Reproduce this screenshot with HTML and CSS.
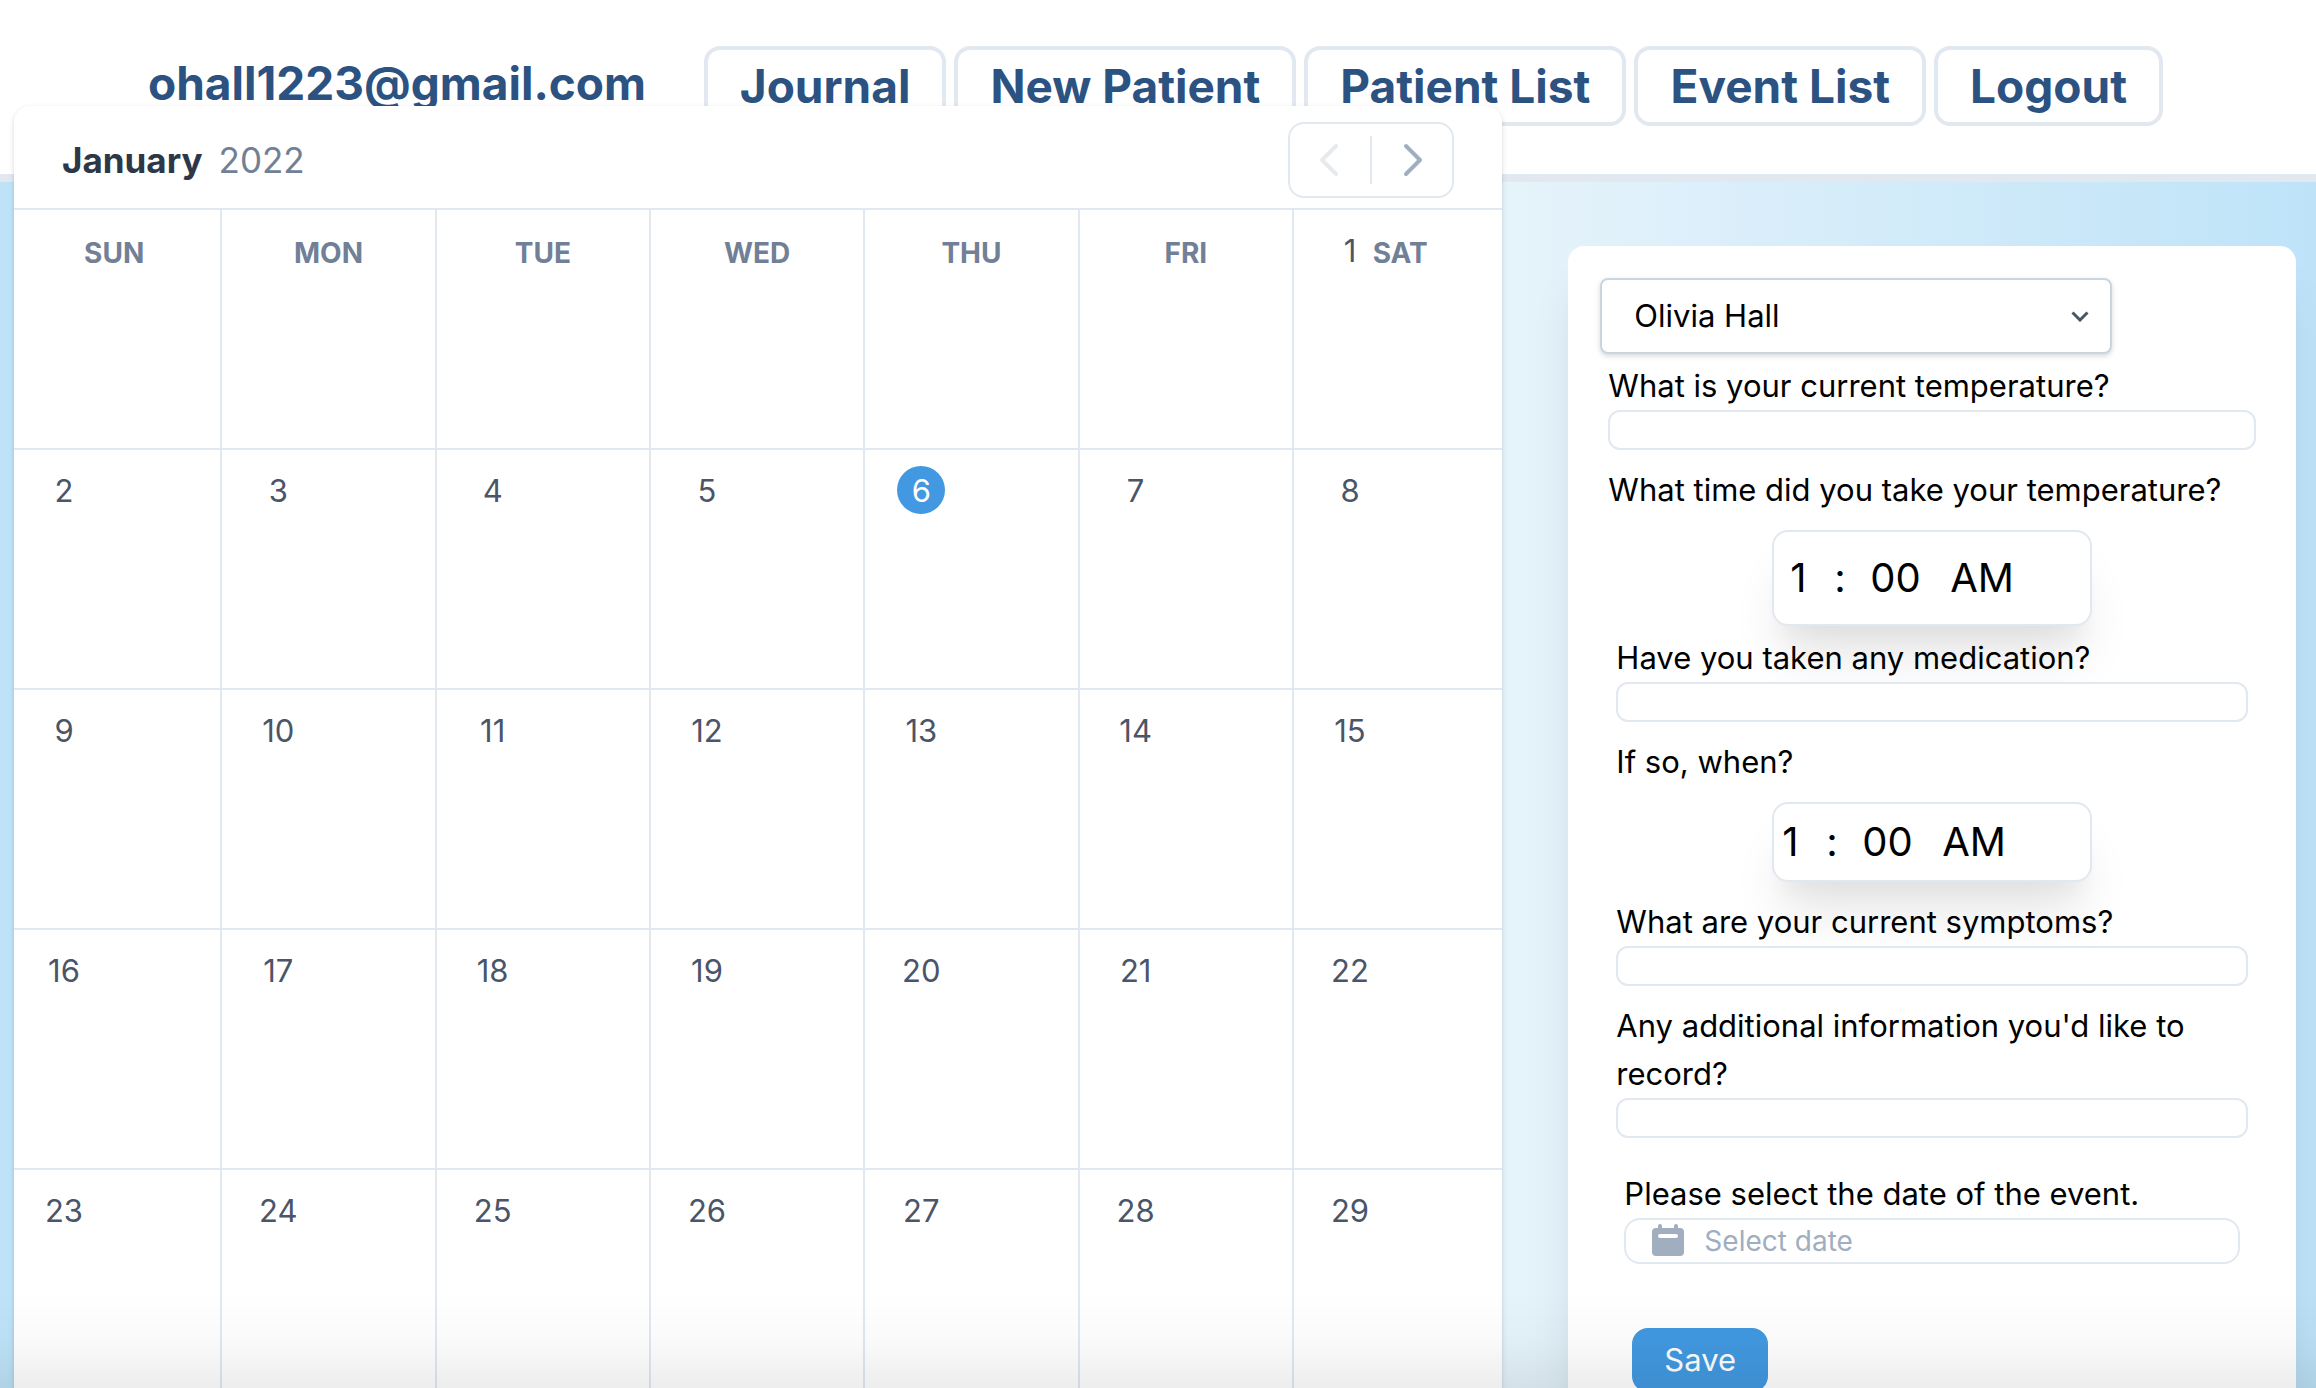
FILE: index.html
```html
<!DOCTYPE html>
<html lang="en">
<head>
<meta charset="utf-8">
<title>Journal</title>
<link rel="stylesheet" href="styles.css">
</head>
<body>
<header class="topbar">
  <span class="account">ohall1223@gmail.com</span>
  <nav class="nav">
    <a class="nav-link" href="#journal">Journal</a>
    <a class="nav-link" href="#new-patient">New Patient</a>
    <a class="nav-link" href="#patients">Patient List</a>
    <a class="nav-link" href="#events">Event List</a>
    <a class="nav-link" href="#logout">Logout</a>
  </nav>
</header>
<main class="content">
  <section class="calendar">
    <div class="calendar-head">
      <h1 class="calendar-title"><b class="month">January</b><span class="year">2022</span></h1>
      <div class="pager">
        <button class="pager-button" type="button" disabled>
          <svg class="pager-icon" viewBox="0 0 24 24"><path d="M15 19l-7-7 7-7"/></svg>
        </button>
        <button class="pager-button" type="button">
          <svg class="pager-icon" viewBox="0 0 24 24"><path d="M9 5l7 7-7 7"/></svg>
        </button>
      </div>
    </div>
    <table class="month-table">
      <thead>
        <tr>
          <th><span class="weekday">SUN</span></th>
          <th><span class="weekday">MON</span></th>
          <th><span class="weekday">TUE</span></th>
          <th><span class="weekday">WED</span></th>
          <th><span class="weekday">THU</span></th>
          <th><span class="weekday">FRI</span></th>
          <th><span class="weekday">SAT</span></th>
        </tr>
      </thead>
      <tbody>
        <tr><td></td><td></td><td></td><td></td><td></td><td></td><td><span class="day">1</span></td></tr>
        <tr><td><span class="day">2</span></td><td><span class="day">3</span></td><td><span class="day">4</span></td><td><span class="day">5</span></td><td><span class="day today">6</span></td><td><span class="day">7</span></td><td><span class="day">8</span></td></tr>
        <tr><td><span class="day">9</span></td><td><span class="day">10</span></td><td><span class="day">11</span></td><td><span class="day">12</span></td><td><span class="day">13</span></td><td><span class="day">14</span></td><td><span class="day">15</span></td></tr>
        <tr><td><span class="day">16</span></td><td><span class="day">17</span></td><td><span class="day">18</span></td><td><span class="day">19</span></td><td><span class="day">20</span></td><td><span class="day">21</span></td><td><span class="day">22</span></td></tr>
        <tr><td><span class="day">23</span></td><td><span class="day">24</span></td><td><span class="day">25</span></td><td><span class="day">26</span></td><td><span class="day">27</span></td><td><span class="day">28</span></td><td><span class="day">29</span></td></tr>
      </tbody>
    </table>
  </section>

  <form class="entry">
    <div class="patient">
      <select class="patient-select" aria-label="Patient"><option>Olivia Hall</option></select>
      <svg class="patient-arrow" viewBox="0 0 20 12"><path d="M2.5 2.5L10 10l7.500-7.500"/></svg>
    </div>
    <div class="level">
      <label class="question" for="temperature">What is your current temperature?</label>
      <input class="answer" id="temperature" type="text">
      <label class="question spaced" for="temperature-hour">What time did you take your temperature?</label>
      <div class="time time-roomy">
        <select class="time-part hour" id="temperature-hour"><option>1</option></select>
        <span class="time-part colon">:</span>
        <select class="time-part minute" aria-label="Minutes"><option>00</option></select>
        <select class="time-part" aria-label="AM or PM"><option>AM</option></select>
      </div>
      <div class="level">
        <label class="question" for="medication">Have you taken any medication?</label>
        <input class="answer" id="medication" type="text">
        <label class="question spaced" for="medication-hour">If so, when?</label>
        <div class="time">
          <select class="time-part hour" id="medication-hour"><option>1</option></select>
          <span class="time-part colon">:</span>
          <select class="time-part minute" aria-label="Minutes"><option>00</option></select>
          <select class="time-part" aria-label="AM or PM"><option>AM</option></select>
        </div>
        <label class="question spaced" for="symptoms">What are your current symptoms?</label>
        <input class="answer" id="symptoms" type="text">
        <label class="question spaced" for="notes">Any additional information you'd like to record?</label>
        <input class="answer" id="notes" type="text">
        <div class="level date-level">
          <label class="question" for="date">Please select the date of the event.</label>
          <div class="date">
            <svg class="date-icon" viewBox="0 0 32 32"><rect x="6" width="4" height="8" rx="2"/><rect x="22" width="4" height="8" rx="2"/><path fill-rule="evenodd" d="M4 4h24a4 4 0 0 1 4 4v20a4 4 0 0 1-4 4H4a4 4 0 0 1-4-4V8a4 4 0 0 1 4-4zM8 10a2 2 0 0 0 0 4h16a2 2 0 0 0 0-4z"/></svg>
            <input class="date-input" id="date" type="text" placeholder="Select date">
          </div>
          <button class="save" type="submit">Save</button>
        </div>
      </div>
    </div>
  </form>
</main>
</body>
</html>
```

FILE: styles.css
```css
*, *::before, *::after { box-sizing: border-box; }

body {
  margin: 0;
  height: 100vh;
  overflow: hidden;
  font-family: Inter, "Liberation Sans", sans-serif;
  font-size: 31px;
  line-height: 48px;
  color: #000;
  background: linear-gradient(to right, #bee3f8, #f7fafc, #bee3f8);
}

/* soft shade along the bottom of the window */
body::after {
  content: "";
  position: fixed;
  inset: auto 0 0 0;
  height: 96px;
  pointer-events: none;
  background: linear-gradient(to bottom, rgba(0,0,0,0), rgba(0,0,0,.02) 50%, rgba(0,0,0,.07));
  z-index: 3;
}

input, select, button { font: inherit; color: inherit; margin: 0; }

.topbar {
  display: flex;
  align-items: flex-start;
  justify-content: space-between;
  height: 182px;
  padding: 46px 153px 0 148px;
  background: #fff;
  border-bottom: 8px solid #e2e8f0;
  font-size: 46px;
  font-weight: 700;
  color: #2c5282;
}
.account { line-height: 74px; }
.nav { display: flex; gap: 8px; }
.nav-link {
  padding: 0 32px;
  line-height: 72px;
  border: 4px solid #e2e8f0;
  border-radius: 16px;
  color: inherit;
  text-decoration: none;
}

.content {
  display: grid;
  grid-template-columns: 45fr 22fr;
  align-items: start;
  gap: 66px;
  padding: 0 20px 0 14px;
}

.calendar {
  position: relative;
  z-index: 1;
  margin-top: -76px;
  overflow: hidden;
  background: #fff;
  border-radius: 16px;
  box-shadow: 0 2px 6px rgba(0,0,0,.1), 0 2px 4px rgba(0,0,0,.06);
}
.calendar-head {
  display: flex;
  align-items: center;
  justify-content: space-between;
  padding: 16px 48px 10px;
}
.calendar-title {
  display: flex;
  gap: 16px;
  margin: 0;
  font-size: 35px;
  font-weight: 400;
}
.month { font-weight: 700; color: #2d3748; }
.year { color: #718096; }
.pager {
  display: flex;
  align-items: center;
  height: 76px;
  border: 2px solid #e2e8f0;
  border-radius: 16px;
}
.pager-button {
  display: flex;
  padding: 0 16px;
  border: 0;
  background: none;
  color: #a0aec0;
}
.pager-button + .pager-button { border-left: 2px solid #e2e8f0; }
.pager-button:disabled .pager-icon { opacity: .25; }
.pager-icon {
  width: 48px;
  height: 48px;
  fill: none;
  stroke: currentColor;
  stroke-width: 2;
  stroke-linecap: round;
  stroke-linejoin: round;
}

.month-table {
  table-layout: fixed;
  width: calc(100% + 12px);
  margin: 0 -6px;
  border-spacing: 0;
  border-top: 2px solid #e2e8f0;
}
.month-table th { padding: 0; }
.weekday {
  display: block;
  height: 0;
  padding-right: 2px;
  line-height: 86px;
  font-size: 28px;
  font-weight: 700;
  color: #718096;
}
.month-table td {
  height: 240px;
  padding: 16px 0 0 32px;
  vertical-align: top;
  border: 0 solid #e2e8f0;
  border-width: 0 2px 2px 0;
}
.day {
  display: block;
  width: 48px;
  height: 48px;
  border-radius: 50%;
  line-height: 50px;
  text-align: center;
  color: #4a5568;
}
.today { background: #4299e1; color: #fff; }

.entry {
  margin-top: 64px;
  padding: 32px 32px 64px;
  background: #fff;
  border-radius: 16px;
  box-shadow: 0 40px 50px -10px rgba(0,0,0,.1), 0 20px 20px -10px rgba(0,0,0,.04);
}
.patient { position: relative; width: 512px; margin-bottom: 8px; }
.patient-select {
  display: block;
  width: 100%;
  height: 76px;
  padding: 0 32px;
  appearance: none;
  background: #fff;
  border: 2px solid #cbd5e0;
  border-radius: 8px;
  box-shadow: 0 2px 6px rgba(0,0,0,.1), 0 2px 4px rgba(0,0,0,.06);
}
.patient-arrow {
  position: absolute;
  right: 22px;
  top: 32px;
  width: 20px;
  height: 12px;
  fill: none;
  stroke: #4a5568;
  stroke-width: 3;
  pointer-events: none;
}
.level { padding: 0 8px; }
.question { display: block; }
.spaced { margin-top: 16px; }
.answer {
  display: block;
  width: 100%;
  height: 40px;
  padding: 0 16px;
  background: #fff;
  border: 2px solid #e2e8f0;
  border-radius: 12px;
}
.time {
  display: flex;
  align-items: center;
  width: 320px;
  height: 80px;
  margin: 16px auto 0;
  padding: 8px;
  font-size: 40px;
  background: #fff;
  border: 2px solid #e2e8f0;
  border-radius: 16px;
  box-shadow: 0 40px 50px -10px rgba(0,0,0,.1), 0 20px 20px -10px rgba(0,0,0,.04);
}
.time-roomy { height: 96px; margin-bottom: 8px; padding: 16px; }
.time-part { padding: 0; appearance: none; border: 0; background: none; }
.hour { width: 44px; }
.colon { width: 36px; }
.minute { width: 80px; }

.date-level { padding-top: 32px; }
.date {
  display: flex;
  align-items: center;
  gap: 20px;
  height: 46px;
  padding: 0 26px;
  border: 2px solid #e2e8f0;
  border-radius: 16px;
}
.date-icon { flex: none; width: 32px; height: 32px; fill: #a0aec0; margin-bottom: 2px; }
.date-input {
  flex: 1;
  min-width: 0;
  height: 40px;
  padding: 0;
  border: 0;
  background: none;
  font-size: 28px;
}
.date-input::placeholder { color: #a0aec0; opacity: 1; }
.save {
  display: block;
  height: 64px;
  margin: 64px 0 0 8px;
  padding: 0 32px;
  border: 0;
  border-radius: 16px;
  background: #4299e1;
  color: #fff;
}
```
